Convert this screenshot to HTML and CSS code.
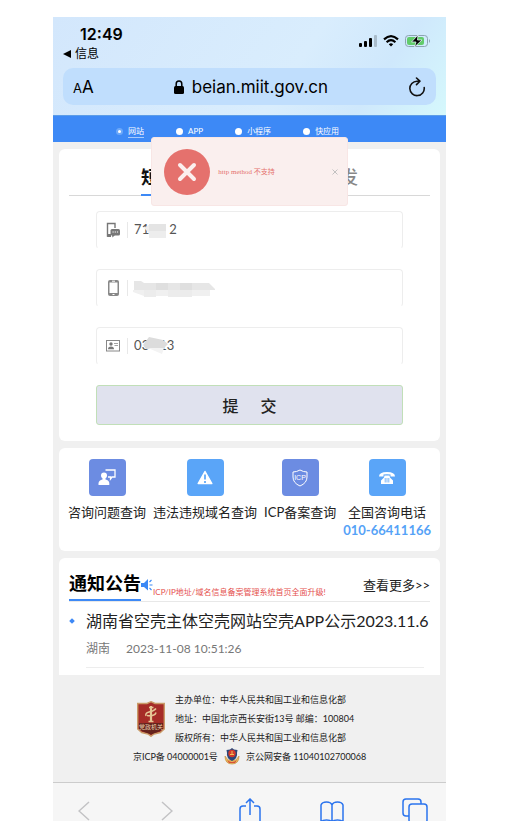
FILE: index.html
```html
<!DOCTYPE html>
<html lang="zh-CN">
<head>
    <meta charset="UTF-8">
    <meta name="viewport" content="width=device-width, initial-scale=1.0">
    <title>ICP备案短信核验</title>
    <link rel="stylesheet" href="styles.css">
</head>
<body>
<div class="phone">

    <header class="browser">
        <div class="status">
            <div class="clock">
                <span class="time">12:49</span>
                <a class="back" href="#"><svg width="8" height="8" viewBox="0 0 8 8"><path d="M8 0v8L0 4z"/></svg>信息</a>
            </div>
            <div class="signals">
                <svg width="18" height="12" viewBox="0 0 18 12">
                    <rect x="0" y="8" width="3" height="4" rx="1"/>
                    <rect x="5" y="6" width="3" height="6" rx="1"/>
                    <rect x="10" y="3" width="3" height="9" rx="1"/>
                    <rect x="15" y="0" width="3" height="12" rx="1" fill="#a9bccb"/>
                </svg>
                <svg width="16" height="12" viewBox="0 0 16 12" fill="none" stroke="#000" stroke-width="2.2">
                    <path d="M1 4.4Q8-2 15 4.4M3.6 7.2Q8 3.2 12.4 7.2"/>
                    <path d="M5.8 9.2Q8 7.4 10.2 9.2L8 11.6z" fill="#000" stroke="none"/>
                </svg>
                <svg width="26" height="12" viewBox="0 0 26 12">
                    <rect x=".5" y=".5" width="22" height="11" rx="3" fill="none" stroke="#8da3b1"/>
                    <rect x="2" y="2" width="17" height="8" rx="2" fill="#62cc6b"/>
                    <path d="M24 4q2 2 0 4z" fill="#8da3b1"/>
                    <path d="M13 0L6.500 7H11L9.500 12L17 5H12.500z" stroke="#e3f4f4" stroke-width=".8"/>
                </svg>
            </div>
        </div>
        <div class="address">
            <button class="text-size" aria-label="文字大小"><small>A</small>A</button>
            <div class="url">
                <svg width="10" height="14" viewBox="0 0 10 14"><rect y="6" width="10" height="8" rx="1.500"/><path d="M2.200 7V4a2.800 3 0 0 1 5.600 0v3" fill="none" stroke="#000" stroke-width="1.500"/></svg>
                <span>beian.miit.gov.cn</span>
            </div>
            <button class="reload" aria-label="刷新">
                <svg width="18" height="20" viewBox="0 0 18 20" fill="none" stroke="#111" stroke-width="1.600" stroke-linecap="round" stroke-linejoin="round"><path d="M16.200 10.500A7.200 7.200 0 1 1 9 4.200h2.500M8.500 1l3.400 3.200L8.500 7.600"/></svg>
            </button>
        </div>
    </header>

    <main>
        <nav class="types">
            <label class="checked"><input type="radio" name="type" checked><span>网站</span></label>
            <label><input type="radio" name="type"><span>APP</span></label>
            <label><input type="radio" name="type"><span>小程序</span></label>
            <label><input type="radio" name="type"><span>快应用</span></label>
        </nav>

        <div class="alert" role="alert">
            <svg width="46" height="46" viewBox="0 0 46 46"><circle cx="23" cy="23" r="23" fill="#e5716d"/><path d="M16 16l14 14M30 16L16 30" stroke="#fbefee" stroke-width="4" stroke-linecap="round"/></svg>
            <p>http method 不支持</p>
            <button aria-label="关闭"><svg width="6" height="6" viewBox="0 0 6 6"><path d="M.5.5l5 5M5.500.5l-5 5" stroke="#bbb" stroke-width=".9"/></svg></button>
        </div>

        <section class="card verify">
            <div class="tabs">
                <a class="active" href="#">短信核验</a>
                <a href="#">短信重发</a>
            </div>
            <form>
                <div class="field">
                    <label for="code"><svg width="14" height="16" viewBox="0 0 14 16"><path d="M4 14H1.500V1.500H9V6" fill="none" stroke="#777" stroke-width="1.400"/><path d="M1 12h4v3H2q-1 0-1-1z" fill="#777"/><rect x="4.500" y="7" width="9.500" height="6.500" rx="1.500" fill="#777"/><path d="M6 13h3l-2.500 2.500z" fill="#777"/><path d="M6.500 10h1.200M8.700 10h1.200M10.900 10h1.200" stroke="#fff" stroke-width="1.200"/></svg></label>
                    <input id="code" type="text" aria-label="验证码" value="71      2">
                    <svg class="mask mask-code" width="24" height="16" viewBox="0 0 24 16"><path d="M0 5l6-4v10z" fill="#eee"/><path d="M5 1h17v7H5z" fill="#e4e4e4"/><path d="M5 8h17v7H5z" fill="#ededed"/></svg>
                </div>
                <div class="field">
                    <label for="mobile"><svg width="14" height="16" viewBox="0 0 14 16"><rect x="2" y="0" width="11" height="16" rx="2" fill="#888"/><rect x="3.500" y="2.500" width="8" height="10.500" fill="#fff"/><path d="M6 1.200h3M6.500 14.500h2" stroke="#fff"/></svg></label>
                    <input id="mobile" type="tel" aria-label="手机号">
                    <svg class="mask" width="82" height="18" viewBox="0 0 82 18"><path d="M1 0h7l3 2h65l6 6v1H1z" fill="#e6e6e6"/><path d="M23 2h12v7H23zM47 2h12v7H47z" fill="#dfdfdf"/><path d="M0 9h77v6H11L0 11z" fill="#f0f0f0"/><path d="M11 9h12v7H11zM35 9h24v7H35z" fill="#ececec"/></svg>
                </div>
                <div class="field">
                    <label for="idcard"><svg width="14" height="12" viewBox="0 0 14 12"><rect x=".5" y=".5" width="13" height="10.500" fill="#fff" stroke="#888"/><circle cx="5" cy="4" r="1.700" fill="#777"/><path d="M2 9.200q0-2.700 3-2.700t3 2.700z" fill="#777"/><path d="M8 3.500h4M8.500 5.500h3.500" stroke="#999" stroke-width=".9"/></svg></label>
                    <input id="idcard" type="text" aria-label="证件号后六位" value="03   13">
                    <svg class="mask mask-id" width="26" height="18" viewBox="0 0 26 18"><path d="M0 8l6-8 14 3 5 4-5 5H3z" fill="#dcdcdc"/><path d="M5 11h16l-2 6z" fill="#f3f3f3"/></svg>
                </div>
                <button class="submit" type="submit"><span>提</span><span>交</span></button>
            </form>
        </section>

        <section class="card services">
            <a href="#">
                <i class="tile violet"><svg width="18" height="17" viewBox="0 0 18 17"><path d="M7.500 1h9.500v7h-3l-1.500 2v-2H10" fill="none" stroke="#fff" stroke-width="1.300"/><circle cx="6" cy="6.500" r="3" fill="#fff"/><path d="M4.500 8h3v2.500q3.500.5 3.800 3.500v2H0.500v-2q.5-3 4-3.500z" fill="#fff"/></svg></i>
                咨询问题查询
            </a>
            <a href="#">
                <i class="tile blue"><svg width="16" height="15" viewBox="0 0 16 15"><path d="M8 1.500L14.800 13.500H1.200z" fill="#fff" stroke="#fff" stroke-width="1.500" stroke-linejoin="round"/><path d="M8 4.500v5M8 11v2" stroke="#5aa5f8" stroke-width="1.700"/></svg></i>
                违法违规域名查询
            </a>
            <a href="#">
                <i class="tile violet"><svg width="18" height="18" viewBox="0 0 18 18"><path d="M9 1Q12.500 3 16 3v5q0 6-7 9-7-3-7-9V3q3.500 0 7-2z" fill="none" stroke="#fff"/><text x="9" y="11" text-anchor="middle" class="icp">ICP</text></svg></i>
                ICP备案查询
            </a>
            <a href="#">
                <i class="tile blue"><svg width="16" height="14" viewBox="0 0 16 14"><path d="M0 5.500Q0 1 8 1t8 4.500h-4.500V3.600Q8 3 4.500 3.600v1.900H0z" fill="#fff"/><path d="M5.500 4.500h5l.5 2 3 3V13H2V9.500l3-3z" fill="#fff"/><path d="M6.200 7v4.500M8 7v4.500M9.800 7v4.500" stroke="#5aa5f8" stroke-width=".8"/></svg></i>
                全国咨询电话
                <strong>010-66411166</strong>
            </a>
        </section>

        <section class="card notice">
            <div class="notice-head">
                <h2>通知公告</h2>
                <svg width="12" height="12" viewBox="0 0 12 12"><path d="M0 4h3l4-4v11.500L3 8H0z" fill="#3a89f5"/><path d="M8.500 3l2-2M8.500 6h3M8.500 9l2 2" stroke="#3a89f5" stroke-width="1.100"/></svg>
                <a class="hot" href="#">ICP/IP地址/域名信息备案管理系统首页全面升级!</a>
                <a class="more" href="#">查看更多&gt;&gt;</a>
            </div>
            <article>
                <a href="#">湖南省空壳主体空壳网站空壳APP公示2023.11.6</a>
                <p><span>湖南</span><time>2023-11-08 10:51:26</time></p>
            </article>
        </section>

        <footer>
            <div class="owner">
                <svg width="28" height="36" viewBox="0 0 28 36">
                    <path d="M14 .7l4 1.800h9.300V28l-4 3.500-6.300 1.500-3 2.300-3-2.300-6.300-1.500L.7 28V2.500H10z" fill="#a62c27" stroke="#c99b68" stroke-width="1.400"/>
                    <path d="M2 22h24v6l-4 2.500-8 3-8-3L2 28z" fill="#65221d"/>
                    <path d="M14 5v16" stroke="#e6c694" stroke-width="2.200"/>
                    <path d="M9 15q-1-3 3-4 5-1 7-3.500M10 14.500q8 1 9-3M11.500 20.500h5M12 6.500h4.500" fill="none" stroke="#e6c694" stroke-width="1.500"/>
                    <text x="14" y="28" text-anchor="middle" class="seal">党政机关</text>
                </svg>
                <div class="lines">
                    <p>主办单位：中华人民共和国工业和信息化部</p>
                    <p>地址：中国北京西长安街13号 邮编：100804</p>
                    <p>版权所有：中华人民共和国工业和信息化部</p>
                </div>
            </div>
            <p class="records">
                <a href="#">京ICP备 04000001号</a>
                <svg width="16" height="17" viewBox="0 0 16 17">
                    <path d="M1 8q0 8 7 8t7-8l-3 4H4z" fill="#e9bd62" stroke="#c78f3e" stroke-width=".7"/>
                    <path d="M8 0l2 1.500 3.500.5-.5 3q1 5-5 8Q2 10 3 5l-.5-3L6 1.500z" fill="#2b4779"/>
                    <circle cx="8" cy="5.500" r="3.700" fill="#d33b2d"/><path d="M6 6.500h4M8 3v3" stroke="#f2c057"/>
                    <path d="M3 12q5 4 10 0l-2 3H5z" fill="#d94f36"/>
                </svg>
                <a href="#">京公网安备 11040102700068</a>
            </p>
        </footer>
    </main>

    <nav class="toolbar">
        <button class="off" aria-label="后退"><svg width="12" height="20" viewBox="0 0 12 20"><path d="M11 1L1 10l10 9"/></svg></button>
        <button class="off" aria-label="前进"><svg width="12" height="20" viewBox="0 0 12 20"><path d="M1 1l10 9L1 19"/></svg></button>
        <button aria-label="分享"><svg width="22" height="28" viewBox="0 0 22 28"><path d="M7 8H4Q1 8 1 11v16h20V11q0-3-3-3h-3M11 17V1M7 5l4-4 4 4"/></svg></button>
        <button aria-label="书签"><svg width="24" height="26" viewBox="0 0 24 26"><path d="M12 7Q11 4 6.500 4T1 7v17q1-2 5.500-2t5.500 2V7q1-3 5.500-3T23 7v17q-1-2-5.500-2T12 24"/></svg></button>
        <button aria-label="标签页"><svg width="26" height="26" viewBox="0 0 26 26"><path d="M7 18H4q-3 0-3-3V4q0-3 3-3h12q3 0 3 3v2"/><rect x="7" y="6" width="18" height="19" rx="3"/></svg></button>
    </nav>

</div>
</body>
</html>
```
FILE: styles.css
```css
* {
    box-sizing: border-box;
    margin: 0;
    padding: 0;
}
body {
    height: 100vh;
    padding: 17px 16% 0 10%;
    overflow: hidden;
    background: #fff;
    color: #222;
    font-family: Lato, "Noto Sans CJK SC", sans-serif;
}
a {
    color: inherit;
    text-decoration: none;
}
button {
    border: none;
    background: none;
    color: inherit;
    font-family: inherit;
}
svg {
    display: block;
    flex: none;
}
.phone {
    display: flex;
    flex-direction: column;
    height: 100%;
    overflow: hidden;
    background: #f0f0f0;
}

/* browser chrome */
.browser {
    flex: none;
    padding: 8px 10px 10px;
    background: linear-gradient(125deg, #d3e7fc, #d9edfd 60%, #cfe8fc 80%, #d5f8fc);
    color: #000;
    font-family: Inter, "Noto Sans CJK SC", sans-serif;
}
.status {
    display: flex;
    justify-content: space-between;
    height: 43px;
}
.time {
    display: block;
    padding-left: 17px;
    font-size: 16px;
    font-weight: 600;
    line-height: 18px;
}
.back {
    display: flex;
    align-items: center;
    gap: 4px;
    padding-top: 2px;
    font-size: 12px;
    line-height: 18px;
}
.signals {
    display: flex;
    gap: 6px;
    padding: 10px 5px 0 0;
}
.address {
    display: flex;
    align-items: center;
    justify-content: space-between;
    height: 37px;
    padding: 0 10px;
    border-radius: 10px;
    background: #c0defd;
}
.text-size {
    font-size: 17px;
}
.text-size small {
    font-size: 13px;
}
.url {
    display: flex;
    align-items: center;
    gap: 8px;
    font-size: 17px;
}

/* type switch */
main {
    position: relative;
    flex: none;
}
.types {
    display: flex;
    gap: 32px;
    height: 27px;
    padding: 4px 0 0 63px;
    border-top: 1px solid #5c9de8;
    background: #3d89f6;
    color: #fff;
    font-size: 8px;
    line-height: 12px;
}
.types label {
    display: flex;
    align-items: center;
    gap: 5px;
    height: 22px;
}
.types input {
    appearance: none;
    width: 7px;
    height: 7px;
    border-radius: 50%;
    background: #fff;
}
.types input:checked {
    border: 2px solid #6ca8f9;
}
.types .checked span {
    border-bottom: 1px solid #a9cbfb;
}

/* error message */
.alert {
    position: absolute;
    top: 22px;
    left: 25%;
    z-index: 1;
    display: flex;
    align-items: center;
    width: 50%;
    height: 69px;
    padding: 0 9px 0 12px;
    border: 1px solid #f8e6e5;
    border-radius: 3px;
    background: #faefee;
    color: #e5716d;
    font: 7px/12px "Liberation Serif", "Noto Sans CJK SC", serif;
}
.alert p {
    flex: 1;
    padding-left: 8px;
}

.card {
    margin: 0 6px 7px;
    border-radius: 6px;
    background: #fff;
}

/* sms form */
.verify {
    margin-top: 7px;
    padding: 14px 10px 16px;
}
.tabs {
    display: flex;
    justify-content: space-between;
    padding: 0 72px;
    border-bottom: 1px solid #d8d8d8;
    color: #888;
    font-size: 18px;
    font-weight: 500;
    line-height: 28px;
}
.tabs a {
    margin-bottom: -1px;
    padding-bottom: 3px;
}
.tabs .active {
    border-bottom: 2px solid #3d89f6;
    color: #111;
    font-weight: 700;
}
form {
    display: flex;
    flex-direction: column;
    gap: 20px;
    padding: 15px 27px 0;
}
.field {
    position: relative;
    display: flex;
    align-items: center;
    height: 38px;
    border: 1px solid #ededed;
    border-bottom-color: transparent;
    border-radius: 4px;
}
.field label {
    display: flex;
    align-items: center;
    width: 31px;
    height: 16px;
    padding-left: 9px;
    border-right: 1px solid #e8e8e8;
}
.field input {
    flex: 1;
    min-width: 0;
    padding: 0 6px 2px;
    border: none;
    outline: none;
    background: none;
    color: #555;
    font: 13px/18px Lato, sans-serif;
}
.mask {
    position: absolute;
    top: 11px;
    left: 36px;
}
.mask-code {
    left: 47px;
}
.mask-id {
    top: 9px;
    left: 46px;
}
.submit {
    display: flex;
    align-items: center;
    justify-content: center;
    gap: 22px;
    height: 40px;
    border: 1px solid #c1dfb8;
    border-radius: 3px;
    background: #e0e2ee;
    font-size: 16px;
    font-weight: 500;
}

/* services */
.services {
    display: flex;
    justify-content: space-between;
    height: 103px;
    padding: 11px 9px 0;
    font-size: 13px;
    line-height: 18px;
    white-space: nowrap;
}
.services a {
    display: flex;
    flex-direction: column;
    align-items: center;
}
.tile {
    display: flex;
    align-items: center;
    justify-content: center;
    width: 37px;
    height: 37px;
    margin-bottom: 7px;
    border-radius: 4px;
}
.violet {
    background: #6c8ce2;
}
.blue {
    background: #5aa5f8;
}
.icp {
    fill: #fff;
    font: 7px "Liberation Sans", sans-serif;
}
.services strong {
    color: #55a2f7;
}

/* notices */
.notice {
    height: 117px;
    margin-bottom: 0;
    padding: 11px 10px 0;
    border-radius: 6px 6px 0 0;
}
.notice-head {
    display: flex;
    align-items: center;
    border-bottom: 1px solid #e8e8e8;
    white-space: nowrap;
}
.notice h2 {
    padding-bottom: 2px;
    border-bottom: 2px solid #3d89f6;
    color: #000;
    font-size: 18px;
    font-weight: 700;
    line-height: 28px;
}
.hot {
    align-self: flex-end;
    padding-bottom: 2px;
    color: #e5504e;
    font-size: 8px;
    line-height: 14px;
}
.more {
    margin-left: auto;
    font-size: 13px;
    line-height: 18px;
}
article {
    position: relative;
    margin-right: 6px;
    margin-left: 17px;
    padding: 7px 0 9px;
    border-bottom: 1px solid #ededed;
}
article::before {
    content: "";
    position: absolute;
    top: 17px;
    left: -16px;
    width: 4px;
    height: 4px;
    background: #3d89f6;
    transform: rotate(45deg);
}
article a {
    font-size: 16px;
    line-height: 24px;
    white-space: nowrap;
}
article p {
    display: flex;
    gap: 16px;
    padding-top: 7px;
    color: #777;
    font-size: 12px;
    line-height: 18px;
}

footer {
    height: 107px;
    padding-top: 15px;
    font-size: 9px;
    line-height: 19px;
    white-space: nowrap;
}
.owner {
    display: flex;
    align-items: center;
    justify-content: center;
    gap: 10px;
    padding-right: 8px;
}
.seal {
    fill: #e9d1ae;
    font: 6px "Noto Sans CJK SC", sans-serif;
}
.records {
    display: flex;
    align-items: center;
    justify-content: center;
    gap: 6px;
}

.toolbar {
    display: flex;
    flex: 1;
    align-items: flex-start;
    justify-content: space-between;
    padding: 15px 18px 0;
    border-top: 1px solid #ccc;
    background: #f6f6f6;
}
.toolbar button {
    display: flex;
    justify-content: center;
    width: 26px;
}
.toolbar svg {
    fill: none;
    stroke: #2b74ee;
    stroke-width: 1.5;
}
.toolbar .off {
    padding-top: 3px;
}
.toolbar .off svg {
    stroke: #c3c3c5;
}
```
